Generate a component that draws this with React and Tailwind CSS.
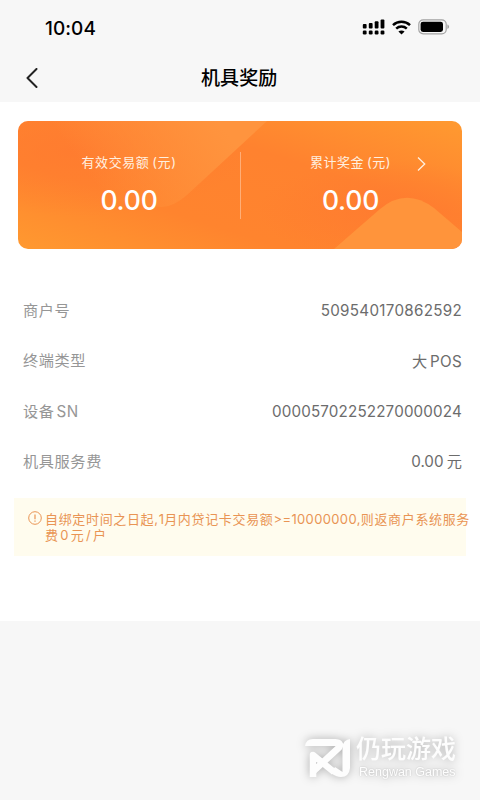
import React from "react";

const rows = [
  { label: "商户号", value: "509540170862592", valueClass: "tracking-[0.29px]" },
  { label: "终端类型", value: "大 POS", valueClass: "tracking-[0.3px] [word-spacing:-2px]" },
  { label: "设备 SN", value: "00005702252270000024", valueClass: "tracking-[0.16px]" },
  { label: "机具服务费", value: "0.00 元", valueClass: "[word-spacing:-1px]" },
];

const StatusBar = () => (
  <div className="flex h-[54px] items-center justify-between pl-[45px] pr-[30px] text-black">
    <span className="mt-[3px] text-[19px] font-medium leading-6 tracking-[0.05px]">10:04</span>
    <div className="flex items-center gap-[7px]">
      <svg width="23" height="16" viewBox="0 0 23 16" fill="currentColor">
        <rect x="0.8" y="5" width="3.8" height="4.6" rx="1" />
        <rect x="6.8" y="4" width="3.8" height="5.6" rx="1" />
        <rect x="12.7" y="2.2" width="3.8" height="7.4" rx="1" />
        <rect x="18.6" y="0.4" width="3.8" height="9.2" rx="1" />
        <rect x="0.8" y="11.5" width="3.8" height="3.9" rx="1.2" />
        <rect x="6.8" y="11.5" width="3.8" height="3.9" rx="1.2" />
        <rect x="12.7" y="11.5" width="3.8" height="3.9" rx="1.2" />
        <rect x="18.6" y="11.5" width="3.8" height="3.9" rx="1.2" />
      </svg>
      <svg width="19" height="15" viewBox="0 0 19 15" fill="none" stroke="currentColor" strokeWidth="2.5">
        <path d="M1 5.1C5.7 0.6 13.3 0.6 18 5.1" />
        <path d="M4.2 8.6C7.2 5.8 11.8 5.8 14.8 8.6" />
        <path d="M9.5 14.6L6.4 11.6C8.2 10 10.8 10 12.6 11.6Z" fill="currentColor" stroke="none" />
      </svg>
      <svg width="32" height="16" viewBox="0 0 32 16">
        <rect x="0.8" y="0.8" width="27.4" height="14" rx="4.4" fill="none" stroke="#a3a3a3" strokeWidth="1.2" />
        <rect x="2.6" y="2.7" width="22.4" height="10.3" rx="2.4" fill="#000" />
        <path d="M29.4 5.6C31.6 6.3 31.6 9.3 29.4 10Z" fill="#a3a3a3" />
      </svg>
    </div>
  </div>
);

const RewardCard = () => (
  <div className="relative h-32 overflow-hidden rounded-[10px] bg-[linear-gradient(18deg,#ff9930_0%,#ff842e_32%,#ff822f_65%,#ff9a30_100%)] text-white">
    <svg className="absolute inset-0" width="444" height="128" viewBox="0 0 444 128">
      <defs>
        <linearGradient id="ray" gradientUnits="userSpaceOnUse" x1="90" y1="80" x2="200" y2="0">
          <stop offset="0" stopColor="#ff9840" stopOpacity="0" />
          <stop offset="1" stopColor="#ff943e" />
        </linearGradient>
        <radialGradient id="deep">
          <stop offset="0" stopColor="#ff7930" stopOpacity="0.7" />
          <stop offset="1" stopColor="#ff7930" stopOpacity="0" />
        </radialGradient>
      </defs>
      <ellipse cx="60" cy="30" rx="170" ry="65" fill="url(#deep)" />
      <path d="M0 0H249L169 74Q154 87 142 86Q90 80 0 60Z" fill="url(#ray)" />
      <ellipse cx="370" cy="90" rx="130" ry="50" fill="url(#deep)" />
      <path d="M316 128L362 88Q388 66 416 87L444 111V128Z" fill="#ff943b" />
    </svg>
    <div className="relative flex h-full pt-[31px]">
      <div className="flex w-[222px] flex-col items-center">
        <div className="text-[13px] leading-5 tracking-[0.6px] text-[#fff0e0] [word-spacing:-1.5px]">有效交易额 (元)</div>
        <div className="mt-[12px] text-[26.5px] font-medium leading-8 tracking-[-0.2px]">0.00</div>
      </div>
      <div className="h-[67px] w-px bg-white/35" />
      <div className="relative flex w-[219px] flex-col items-center">
        <div className="text-[13px] leading-5 tracking-[0.5px] text-[#fff0e0] [word-spacing:-1px]">累计奖金 (元)</div>
        <div className="mt-[12px] text-[26.5px] font-medium leading-8 tracking-[-0.2px]">0.00</div>
        <svg className="absolute left-[176px] top-[4px]" width="10" height="16" viewBox="0 0 10 16" fill="none" stroke="#fff0e0" strokeWidth="1.3">
          <path d="M1 1.5L7.7 8L1 14.5" />
        </svg>
      </div>
    </div>
  </div>
);

const Notice = () => (
  <div className="mx-[14px] mt-[10px] flex h-[58px] bg-[#fffcee] pl-[14px] pt-[12px] text-[#e99454]">
    <svg className="mt-px shrink-0" width="14" height="14" viewBox="0 0 14 14" fill="none" stroke="currentColor">
      <circle cx="7" cy="7" r="6.3" />
      <path d="M7 3.4V8.2M7 9.5V10.7" strokeWidth="1.2" />
    </svg>
    <div className="ml-[3px] mt-px whitespace-nowrap text-[13px] leading-4">
      <div className="tracking-[0.66px]">
        自绑定时间之日起,<span className="tracking-[0.2px]">1</span>月内贷记卡交易额
        <span className="tracking-[0.36px]">&gt;=10000000,</span>则返商户系统服务
      </div>
      <div className="tracking-[0.6px] [word-spacing:-2.6px]">费 0 元 / 户</div>
    </div>
  </div>
);

const Watermark = () => (
  <div className="flex items-start pl-[304px] pt-[114px] text-[#fdfdfd] [filter:drop-shadow(0_0_5px_rgba(0,0,0,0.3))]">
    <svg className="mt-[3px]" width="47" height="40" viewBox="0 0 47 40" fill="none" stroke="currentColor" strokeWidth="6.5" strokeLinejoin="round">
      <path d="M1 8Q2 1 9 1H32V8Z" fill="currentColor" stroke="none" />
      <path d="M28 4.3H31Q38 4.5 35 9.5L9 33.5" />
      <path d="M9 39V17L30 34" />
      <path d="M38.5 9Q39 2 46 1V30Q45 39 37 39Q32 39 27 35L31 29L38.5 34Z" fill="currentColor" stroke="none" />
    </svg>
    <div className="ml-[5px] whitespace-nowrap">
      <div className="h-[29px] text-[25px] font-medium leading-[29px]">仍玩游戏</div>
      <div className="ml-[3px] mt-px h-[14px] font-['Liberation_Sans',sans-serif] text-[12.5px] leading-[14px] [text-shadow:0_0_2px_#0003]">Rengwan Games</div>
    </div>
  </div>
);

const App = () => {
  return (
    <div className="h-[800px] w-[480px] overflow-hidden bg-[#f7f7f7] font-['Inter','Noto_Sans_CJK_SC',sans-serif]">
      <StatusBar />
      <div className="flex h-12 items-center pl-[26px]">
        <svg width="12" height="20" viewBox="0 0 12 20" fill="none" stroke="#222" strokeWidth="2" strokeLinecap="round" strokeLinejoin="round">
          <path d="M10.5 1L1.5 10L10.5 19" />
        </svg>
        <h1 className="ml-[163px] mt-[2px] text-[19px] font-medium leading-7 tracking-[0.1px] text-black">机具奖励</h1>
      </div>
      <div className="h-[519px] bg-white pt-[19px]">
        <div className="px-[18px]">
          <RewardCard />
        </div>
        <div className="mt-[37px] pl-[23px] pr-[18px]">
          {rows.map((row) => (
            <div key={row.label} className="flex h-[50.4px] items-center justify-between text-[15.2px]">
              <span className="tracking-[0.6px] text-[#969696] [word-spacing:-3px]">{row.label}</span>
              <span className={`mt-px text-[#6c6c6c] ${row.valueClass}`}>{row.value}</span>
            </div>
          ))}
        </div>
        <Notice />
      </div>
      <Watermark />
    </div>
  );
};

export default App;
